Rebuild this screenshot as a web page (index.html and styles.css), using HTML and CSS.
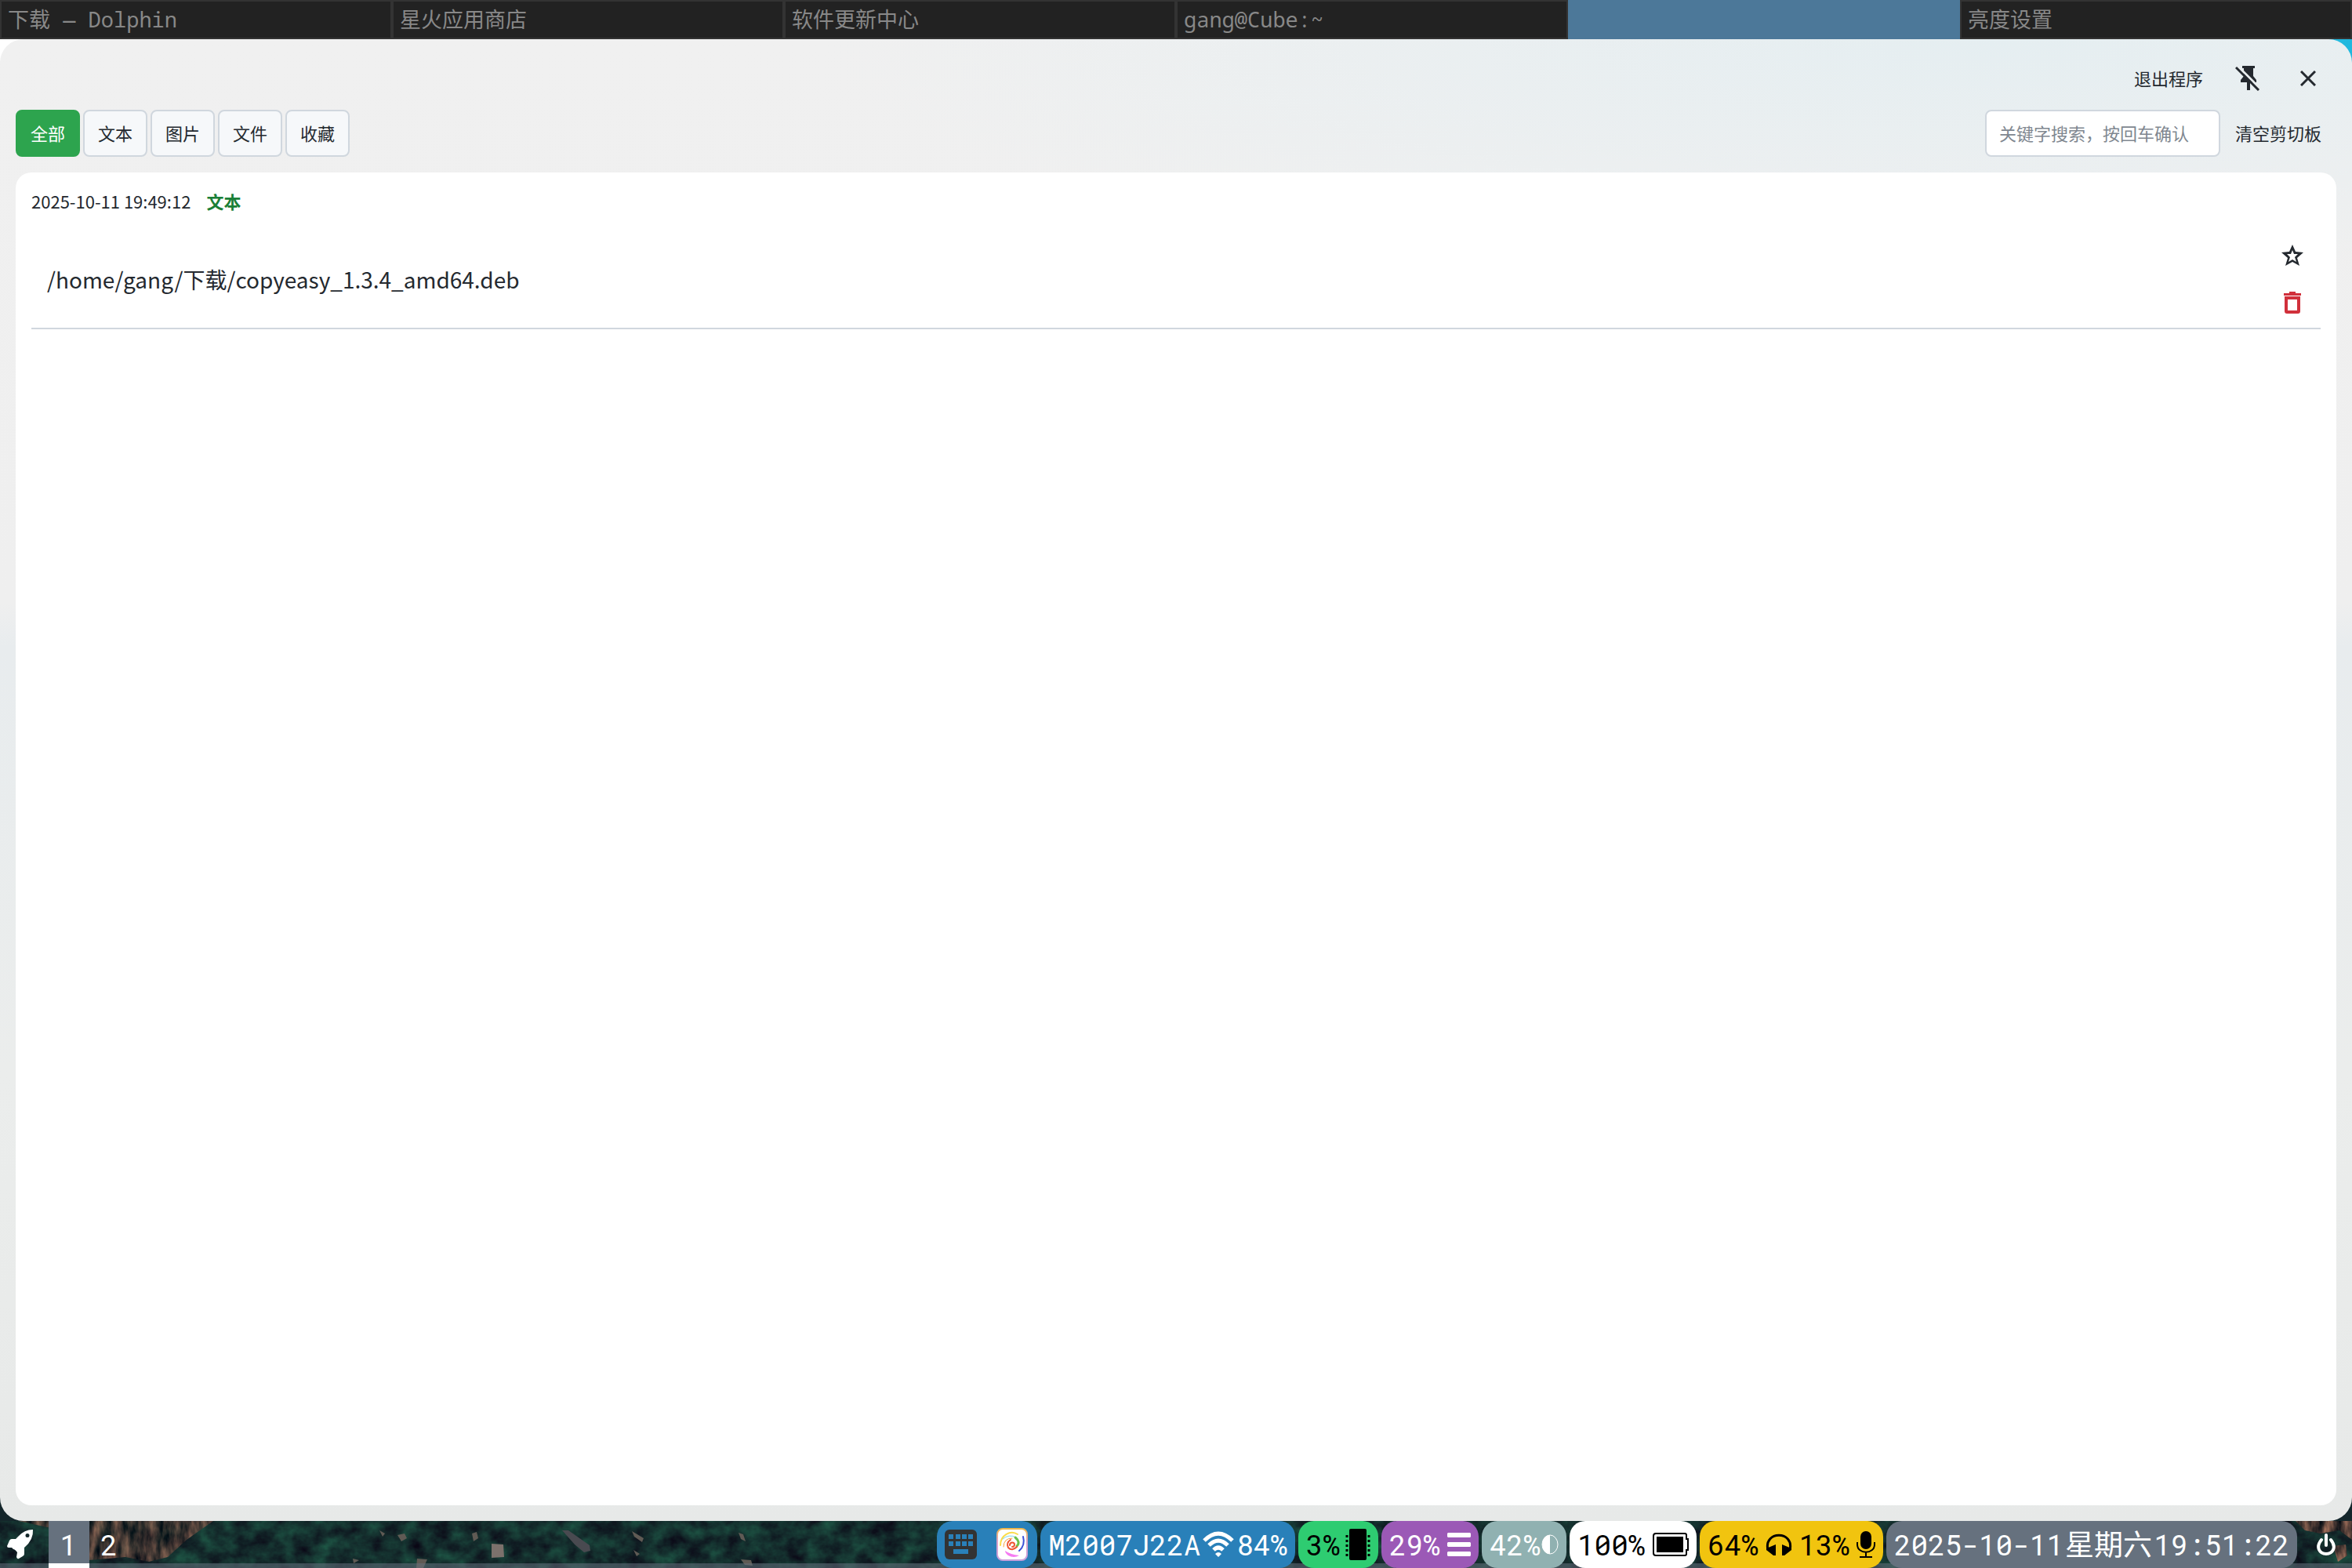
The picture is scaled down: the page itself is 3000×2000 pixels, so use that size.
FILE: index.html
```html
<!DOCTYPE html>
<html lang="zh-CN">
<head>
<meta charset="utf-8">
<title>剪切板</title>
<link rel="stylesheet" href="styles.css">
</head>
<body>
<div class="desktop">
  <nav class="tabs">
    <button class="tab">下载 — Dolphin</button>
    <button class="tab">星火应用商店</button>
    <button class="tab">软件更新中心</button>
    <button class="tab">gang@Cube:~</button>
    <button class="tab tab-active" aria-label="剪切板"></button>
    <button class="tab">亮度设置</button>
  </nav>

  <main class="window">
    <header class="titlebar">
      <button class="plain quit">退出程序</button>
      <button class="plain pin" aria-label="取消固定">
        <svg width="32" height="32" viewBox="0 0 32 32"><path fill="#24292f" d="M9 0H25V3H23V13L27 18V21H19V31H15V21H7V18L11 13V3H9Z"/><path d="M3 0L33 30" stroke="#eaeeef" stroke-width="3"/><path d="M1 2L30 31" stroke="#24292f" stroke-width="3"/></svg>
      </button>
      <button class="plain close" aria-label="关闭">
        <svg width="20" height="20" viewBox="0 0 20 20"><path d="M1 1L19 19M19 1L1 19" stroke="#24292f" stroke-width="3"/></svg>
      </button>
    </header>
    <div class="toolbar">
      <div class="filters">
        <button class="filter filter-active">全部</button>
        <button class="filter">文本</button>
        <button class="filter">图片</button>
        <button class="filter">文件</button>
        <button class="filter">收藏</button>
      </div>
      <input class="search" type="text" aria-label="搜索" placeholder="关键字搜索，按回车确认">
      <button class="plain clear">清空剪切板</button>
    </div>
    <section class="list">
      <article class="entry">
        <div class="meta"><time>2025-10-11 19:49:12</time><strong class="kind">文本</strong></div>
        <div class="entry-body">
          <p class="path">/home/gang/下载/copyeasy_1.3.4_amd64.deb</p>
          <div class="actions">
            <button class="plain action" aria-label="收藏">
              <svg width="28" height="28" viewBox="0 0 28 28"><path fill="#24292f" fill-rule="evenodd" d="M14 0L18 9L28 10L20 17L23 27L14 22L5 27L8 17L0 10L10 9ZM14 7L12 12L7 12L11 16L9 22L14 19L19 22L17 16L21 12L16 12Z"/></svg>
            </button>
            <button class="plain action" aria-label="删除">
              <svg width="22" height="28" viewBox="0 0 22 28"><path fill="#d1303b" fill-rule="evenodd" d="M7 0H15V2H22V5H0V2H7ZM1 6H21V25Q21 28 18 28H4Q1 28 1 25ZM5 10V24H17V10Z"/></svg>
            </button>
          </div>
        </div>
      </article>
    </section>
  </main>

  <footer class="bar">
    <svg class="ground" aria-hidden="true">
      <filter id="forest" x="0" y="0" width="100%" height="100%" color-interpolation-filters="sRGB">
        <feTurbulence type="fractalNoise" baseFrequency="0.04 0.05" numOctaves="4" seed="7"/>
        <feColorMatrix values="0 0.12 0 0 0.02  0 0.5 0 0 -0.06  0 0.3 0 0 0.03  0 0 0 0 1"/>
      </filter>
      <filter id="cliff" x="0" y="0" width="100%" height="100%" color-interpolation-filters="sRGB">
        <feTurbulence type="fractalNoise" baseFrequency="0.09 0.03" numOctaves="4" seed="3"/>
        <feColorMatrix values="1.1 0 0 0 -0.26  0.7 0 0 0 -0.13  0.5 0 0 0 -0.05  0 0 0 0 1"/>
        <feComposite in2="SourceGraphic" operator="in"/>
      </filter>
      <rect width="100%" height="100%" fill="#14262b"/>
      <rect width="100%" height="100%" filter="url(#forest)" opacity=".8"/>
      <path d="M24 0H272L238 24L214 46L190 52L160 46L114 50V14L60 8Z" filter="url(#cliff)" opacity=".8"/>
      <path d="M2928 0H3000V24L2984 12L2960 16L2940 12ZM2976 32L2992 30L2994 44L2982 52Z" filter="url(#cliff)"/>
      <g fill="#5f5a54">
        <path d="M627 29L642 30L643 46L627 47Z" fill="#7c716c"/>
        <path d="M717 12L725 12L752 31L753 38L745 40L733 30Z" fill="#494a50"/>
        <path d="M806 13L821 22L819 27L809 20ZM808 37L816 42L812 45ZM942 15L948 17L951 26L945 23ZM532 48L545 49L540 60H531ZM484 12L491 16L488 20ZM507 18L516 16L519 22L512 26ZM945 49L958 50L960 57L950 56ZM450 48L458 50L451 54ZM602 16L608 14L610 22L604 26Z"/>
      </g>
    </svg>
    <button class="launcher" aria-label="启动器">
      <svg width="34" height="38" viewBox="0 0 34 38"><path fill="#fff" fill-rule="evenodd" d="M33 0Q22 0 14 9L11 12H6Q4 12 3 14L0 21Q0 23 2 23H6L8 25Q10 25 13 29L12 35Q13 38 15 37L20 34Q22 33 22 31V23Q34 13 33 0ZM26 5A2 2 0 1 1 26 10A2 2 0 1 1 26 5Z"/></svg>
    </button>
    <button class="workspace workspace-active">1</button>
    <button class="workspace">2</button>
    <div class="status">
      <div class="pill tray">
        <svg width="41" height="38" viewBox="0 0 41 38"><rect width="41" height="38" rx="6" fill="#333"/><g fill="#2980b9"><path d="M5 6h6v6h-6zM14 6h6v6h-6zM22 6h6v6h-6zM30 6h6v6h-6zM5 15h6v6h-6zM14 15h6v6h-6zM22 15h6v6h-6zM30 15h6v6h-6zM11 25h19v6H11z"/></g></svg>
        <svg width="40" height="42" viewBox="0 0 40 42"><defs><linearGradient id="edge" x2="0" y2="1"><stop offset="0" stop-color="#f2b84c"/><stop offset=".4" stop-color="#d9a0c8"/><stop offset="1" stop-color="#c9a0dc"/></linearGradient></defs><rect x="1" y="1" width="38" height="40" rx="7" fill="#fff" stroke="url(#edge)" stroke-width="2"/><g fill="none" stroke-linecap="round"><path d="M5 22C5 9 18 2 27 8" stroke="#fbdc4a" stroke-width="2"/><path d="M8 14Q16 7 25 12" stroke="#7fd8e8" stroke-width="1"/><path d="M34 11Q37 22 29 29" stroke="#3b50d8" stroke-width="2"/><path d="M24 12Q31 18 26 23" stroke="#6cc04a" stroke-width="3"/><path d="M17 22C17 17 23 18 23 21Q23 24 20 24M26 24Q20 30 15 25Q12 19 18 15" stroke="#ee5533" stroke-width="2"/><path d="M9 24Q9 13 20 13" stroke="#f7a13c" stroke-width="1"/></g><path d="M11 29Q18 34 29 35Q22 39 15 35Q11 32 11 29Z" fill="#f57cf2"/></svg>
      </div>
      <div class="pill network">M2007J22A<svg width="40" height="34" viewBox="0 0 40 34"><g fill="none" stroke="#fff" stroke-width="5"><path d="M2 12Q20 -6 38 12"/><path d="M8 18Q20 6 32 18"/><path d="M14 24Q20 18 26 24"/></g><path fill="#fff" d="M16 29Q20 25 24 29L20 33Z"/></svg>84%</div>
      <div class="pill cpu">3%<svg width="32" height="40" viewBox="0 0 32 40"><rect x="5" width="22" height="40" rx="2"/><path d="M2 8V36M30 8V36" stroke="#000" stroke-width="3" stroke-dasharray="3 3"/></svg></div>
      <div class="pill memory">29%<svg width="30" height="30" viewBox="0 0 30 30"><path fill="#fff" d="M1 0H29L30 1V5L29 6H1L0 5V1ZM1 12H29L30 13V17L29 18H1L0 17V13ZM1 24H29L30 25V29L29 30H1L0 29V25Z"/></svg></div>
      <div class="pill light">42%<svg width="22" height="26" viewBox="0 0 22 26"><ellipse cx="11" cy="13" rx="10" ry="12" fill="none" stroke="#fff"/><path fill="#fff" d="M11 1A10 12 0 0 0 11 25Z"/></svg></div>
      <div class="pill battery">100%<svg width="46" height="30" viewBox="0 0 46 30"><path fill="none" stroke="#000" stroke-width="2" d="M4 1H41Q43 1 43 3V8H45V22H43V27Q43 29 41 29H4Q1 29 1 26V4Q1 1 4 1Z"/><rect x="5" y="5" width="34" height="20"/></svg></div>
      <div class="pill sound">64%<svg width="34" height="28" viewBox="0 0 34 28"><path fill="none" stroke="#000" stroke-width="3" d="M3 21C-3 -4 37 -4 31 21"/><path d="M1 19L13 14V28H10L1 21ZM33 19L21 14V28H24L33 21Z"/></svg>13%<svg width="24" height="34" viewBox="0 0 24 34"><rect x="5" width="14" height="23" rx="7"/><path fill="none" stroke="#000" stroke-width="2" d="M1 14V17C1 30 23 30 23 17V14M12 27V32M4 33H20"/></svg></div>
      <div class="pill clock">2025-10-11<span class="weekday">星期六</span>19:51:22</div>
    </div>
    <button class="power" aria-label="电源">
      <svg width="24" height="28" viewBox="0 0 24 28"><g fill="none" stroke="#fff" stroke-width="4" stroke-linecap="round"><path d="M6 8C-2 18 4 26 12 26S26 18 18 8"/><path d="M12 2V15"/></g></svg>
    </button>
  </footer>
</div>
</body>
</html>
```
FILE: styles.css
```css
* { box-sizing: border-box; }

body {
  margin: 0;
  font-family: "Noto Sans CJK SC", sans-serif;
  color: #24292f;
}

button {
  font: inherit;
  color: inherit;
  border: 0;
  padding: 0;
  background: none;
}

svg { display: block; flex: none; }

.desktop {
  display: flex;
  flex-direction: column;
  min-height: 100vh;
  background:
    linear-gradient(to bottom, transparent 50%, #14262b 50%),
    linear-gradient(to right, #fff 50%, #1fb8de);
}

/* Window tabs */
.tabs { display: flex; height: 50px; }

.tab {
  flex: 1;
  padding: 0 8px;
  border: 2px solid #333;
  background: #222;
  color: #888;
  font: 27px/44px "Noto Sans Mono", "Noto Sans CJK SC", monospace;
  text-align: left;
}

.tab-active { background: #4c7899; border-color: #4c7899; }

/* Clipboard window */
.window {
  flex: 1;
  display: flex;
  flex-direction: column;
  padding: 0 20px 20px;
  border-radius: 30px;
  background:
    radial-gradient(ellipse 1500px 300px at 85% 0, #e5eef1, transparent),
    linear-gradient(to bottom, #f0f0f0, #efefef 38%, #e8ecee 41%, #ebedec 70%, #e7e9e8);
  font-size: 22px;
}

.titlebar {
  display: flex;
  justify-content: flex-end;
  height: 90px;
  padding-top: 10px;
}

.plain { display: flex; align-items: center; justify-content: center; }
.quit { margin-right: 16px; padding-bottom: 2px; }
.pin { width: 82px; }
.close { width: 72px; }

.toolbar { display: flex; height: 60px; margin-bottom: 20px; }
.filters { display: flex; gap: 4px; margin-right: auto; }

.filter {
  width: 82px;
  padding-bottom: 2px;
  border: 2px solid #d0d7de;
  border-radius: 8px;
  background: #f6f8fa;
}

.filter-active { background: #2da44e; border-color: #2da44e; color: #fff; }

.search {
  width: 300px;
  padding: 0 16px 2px;
  border: 2px solid #d0d7de;
  border-radius: 8px;
  background: #fff;
  color: #24292f;
  font: 22px "Noto Sans CJK SC", sans-serif;
}

.search::placeholder { color: #808790; }
.clear { padding: 0 19px 2px; }

.list {
  flex: 1;
  padding: 20px;
  border-radius: 20px;
  background: #fff;
}

.entry { border-bottom: 2px solid #d0d7de; }
.meta { display: flex; gap: 20px; height: 34px; line-height: 32px; }
.kind { color: #1a7f37; font-weight: 700; }

.entry-body {
  display: flex;
  align-items: center;
  justify-content: space-between;
  padding: 22px 6px 2px 20px;
}

.path { margin: 0; font-size: 28px; }
.action { width: 60px; height: 60px; }

/* Bottom bar */
.bar {
  position: relative;
  display: flex;
  height: 60px;
  color: #fff;
  font: 36px/58px "Roboto Mono", "Noto Sans Mono", "Noto Sans CJK SC", monospace;
}

.ground { position: absolute; inset: 0; width: 100%; height: 100%; }

.bar::after {
  content: "";
  position: absolute;
  inset: auto 0 0;
  height: 6px;
  background: #66717e88;
}

.launcher, .workspace, .power { position: relative; height: 60px; }
.launcher { width: 62px; padding-left: 9px; }
.workspace { width: 52px; padding-right: 2px; }
.workspace-active { z-index: 1; background: linear-gradient(#66717e 54px, #fff 54px); }

.status { position: relative; z-index: 1; display: flex; gap: 4px; margin-left: auto; }

.pill {
  display: flex;
  align-items: center;
  justify-content: space-between;
  height: 60px;
  padding: 0 10px;
  border-radius: 20px;
}

.tray { width: 128px; padding-right: 12px; background: #2980b9; }
.network { width: 325px; background: #2980b9; }
.cpu { width: 102px; background: #2ecc71; color: #000; }
.memory { width: 124px; background: #9b59b6; }
.light { width: 108px; background: #90b1b1; }
.battery { width: 162px; background: #fff; color: #000; }
.sound { width: 234px; background: #f1c40f; color: #000; }
.clock { width: 524px; background: #66717e; }
.weekday { font-size: 37px; }
.power { display: flex; align-items: center; justify-content: center; width: 70px; padding-left: 4px; }
```
